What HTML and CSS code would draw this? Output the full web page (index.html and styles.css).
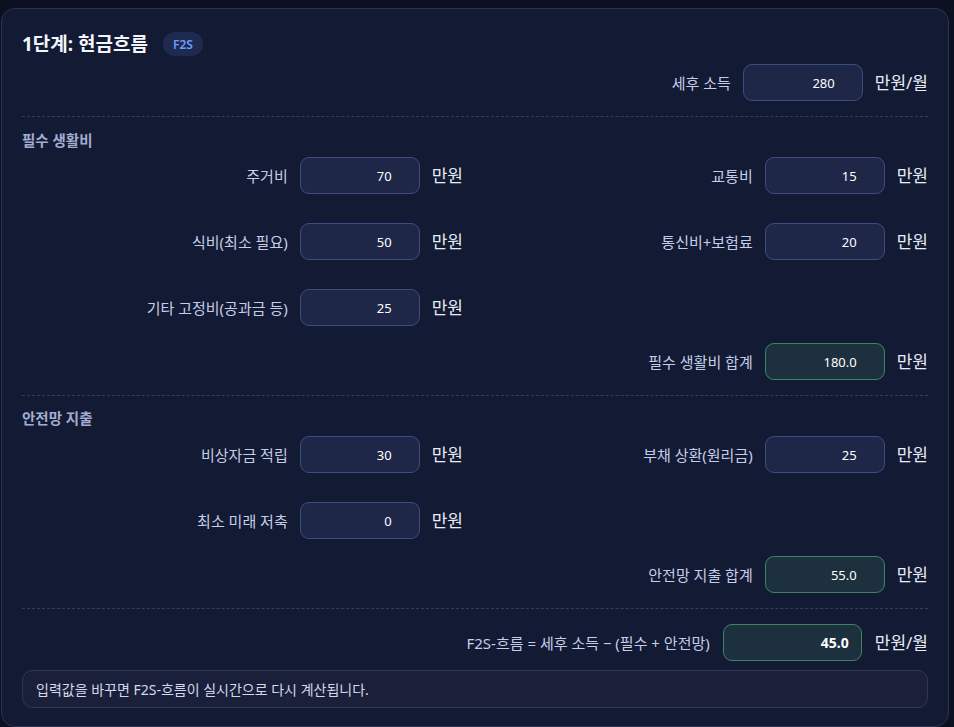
FILE: index.html
```html
<!DOCTYPE html>
<html lang="ko">
<head>
<meta charset="utf-8">
<title>1단계: 현금흐름</title>
<link rel="stylesheet" href="styles.css">
</head>
<body>
<section class="card">
  <header class="header">
    <h1 class="title">1단계: 현금흐름</h1>
    <span class="badge">F2S</span>
  </header>

  <div class="field field-end income">
    <label class="label">세후 소득</label>
    <input class="num" type="text" value="280" readonly>
    <span class="unit">만원/월</span>
  </div>

  <hr class="divider">

  <h2 class="section-title">필수 생활비</h2>
  <div class="grid">
    <div class="field"><label class="label">주거비</label><input class="num" type="text" value="70" readonly><span class="unit">만원</span></div>
    <div class="field"><label class="label">교통비</label><input class="num" type="text" value="15" readonly><span class="unit">만원</span></div>
    <div class="field"><label class="label">식비(최소 필요)</label><input class="num" type="text" value="50" readonly><span class="unit">만원</span></div>
    <div class="field"><label class="label">통신비+보험료</label><input class="num" type="text" value="20" readonly><span class="unit">만원</span></div>
    <div class="field"><label class="label">기타 고정비(공과금 등)</label><input class="num" type="text" value="25" readonly><span class="unit">만원</span></div>
  </div>
  <div class="field field-end total-row">
    <label class="label">필수 생활비 합계</label>
    <input class="num total" type="text" value="180.0" readonly>
    <span class="unit">만원</span>
  </div>

  <hr class="divider">

  <h2 class="section-title second">안전망 지출</h2>
  <div class="grid">
    <div class="field"><label class="label">비상자금 적립</label><input class="num" type="text" value="30" readonly><span class="unit">만원</span></div>
    <div class="field"><label class="label">부채 상환(원리금)</label><input class="num" type="text" value="25" readonly><span class="unit">만원</span></div>
    <div class="field"><label class="label">최소 미래 저축</label><input class="num" type="text" value="0" readonly><span class="unit">만원</span></div>
  </div>
  <div class="field field-end total-row">
    <label class="label">안전망 지출 합계</label>
    <input class="num total" type="text" value="55.0" readonly>
    <span class="unit">만원</span>
  </div>

  <hr class="divider">

  <div class="field field-end result-row">
    <label class="label">F2S-흐름 = 세후 소득 − (필수 + 안전망)</label>
    <input class="num total result" type="text" value="45.0" readonly>
    <span class="unit">만원/월</span>
  </div>

  <p class="note">입력값을 바꾸면 F2S-흐름이 실시간으로 다시 계산됩니다.</p>
</section>
</body>
</html>
```

FILE: styles.css
```css
* { box-sizing: border-box; }

html, body {
  margin: 0;
  background: #0c1121;
}

body {
  padding: 8px 5px 0 1px;
  font-family: "Noto Sans", "Noto Sans CJK KR", sans-serif;
  color: #e6e9f5;
}

.card {
  background: #131a33;
  border: 1px solid #2a3352;
  border-radius: 14px;
  padding: 23px 20px 18px;
}

.header {
  display: flex;
  align-items: center;
  gap: 15px;
  height: 24px;
}

.title {
  margin: 0;
  font-size: 19px;
  line-height: 24px;
  font-weight: 700;
  color: #f3f5fb;
}

.badge {
  display: inline-flex;
  align-items: center;
  justify-content: center;
  height: 24px;
  padding: 0 10px;
  border-radius: 12px;
  background: #1f2a50;
  color: #6d9cff;
  font-size: 12px;
  font-weight: 600;
}

.field {
  display: flex;
  align-items: center;
  justify-content: flex-end;
  gap: 12px;
  height: 37px;
}

.income { margin-top: 8px; }

.label {
  font-size: 15px;
  line-height: 20px;
  color: #c6cde8;
  white-space: nowrap;
}

.unit {
  font-size: 17px;
  line-height: 20px;
  font-weight: 400;
  color: #e8ebf6;
  white-space: nowrap;
}

.num {
  flex: 0 0 auto;
  width: 120px;
  height: 37px;
  margin: 0;
  padding: 0 27px 0 10px;
  border: 1px solid #3a4d80;
  border-radius: 9px;
  background: #1e2748;
  color: #ffffff;
  font-family: "Noto Sans", "Noto Sans CJK KR", sans-serif;
  font-size: 13px;
  text-align: right;
  outline: none;
}

.num.total {
  background: #1d303e;
  border-color: #3b8566;
}

.num.result {
  width: 139px;
  padding-right: 12px;
  font-weight: 700;
  font-size: 14px;
}

.result-row { gap: 13px; margin-top: 15px; }

.divider {
  margin: 15px 0 0;
  height: 0;
  border: 0;
  border-top: 1px dashed #343e5f;
}

.section-title {
  margin: 13px 0 0;
  font-size: 14.5px;
  line-height: 20px;
  font-weight: 700;
  color: #a3add0;
}

.section-title.second { margin-top: 12px; }

.grid {
  display: grid;
  grid-template-columns: 1fr 1fr;
  column-gap: 24px;
  row-gap: 29px;
  margin-top: 7px;
}

.section-title.second + .grid { margin-top: 8px; }

.total-row { margin-top: 17px; }

.note {
  margin: 9px 0 0;
  height: 38px;
  display: flex;
  align-items: center;
  padding: 0 13px;
  background: #1a2039;
  border: 1px solid #2e3756;
  border-radius: 10px;
  font-size: 14px;
  color: #d2d8ee;
}
```
